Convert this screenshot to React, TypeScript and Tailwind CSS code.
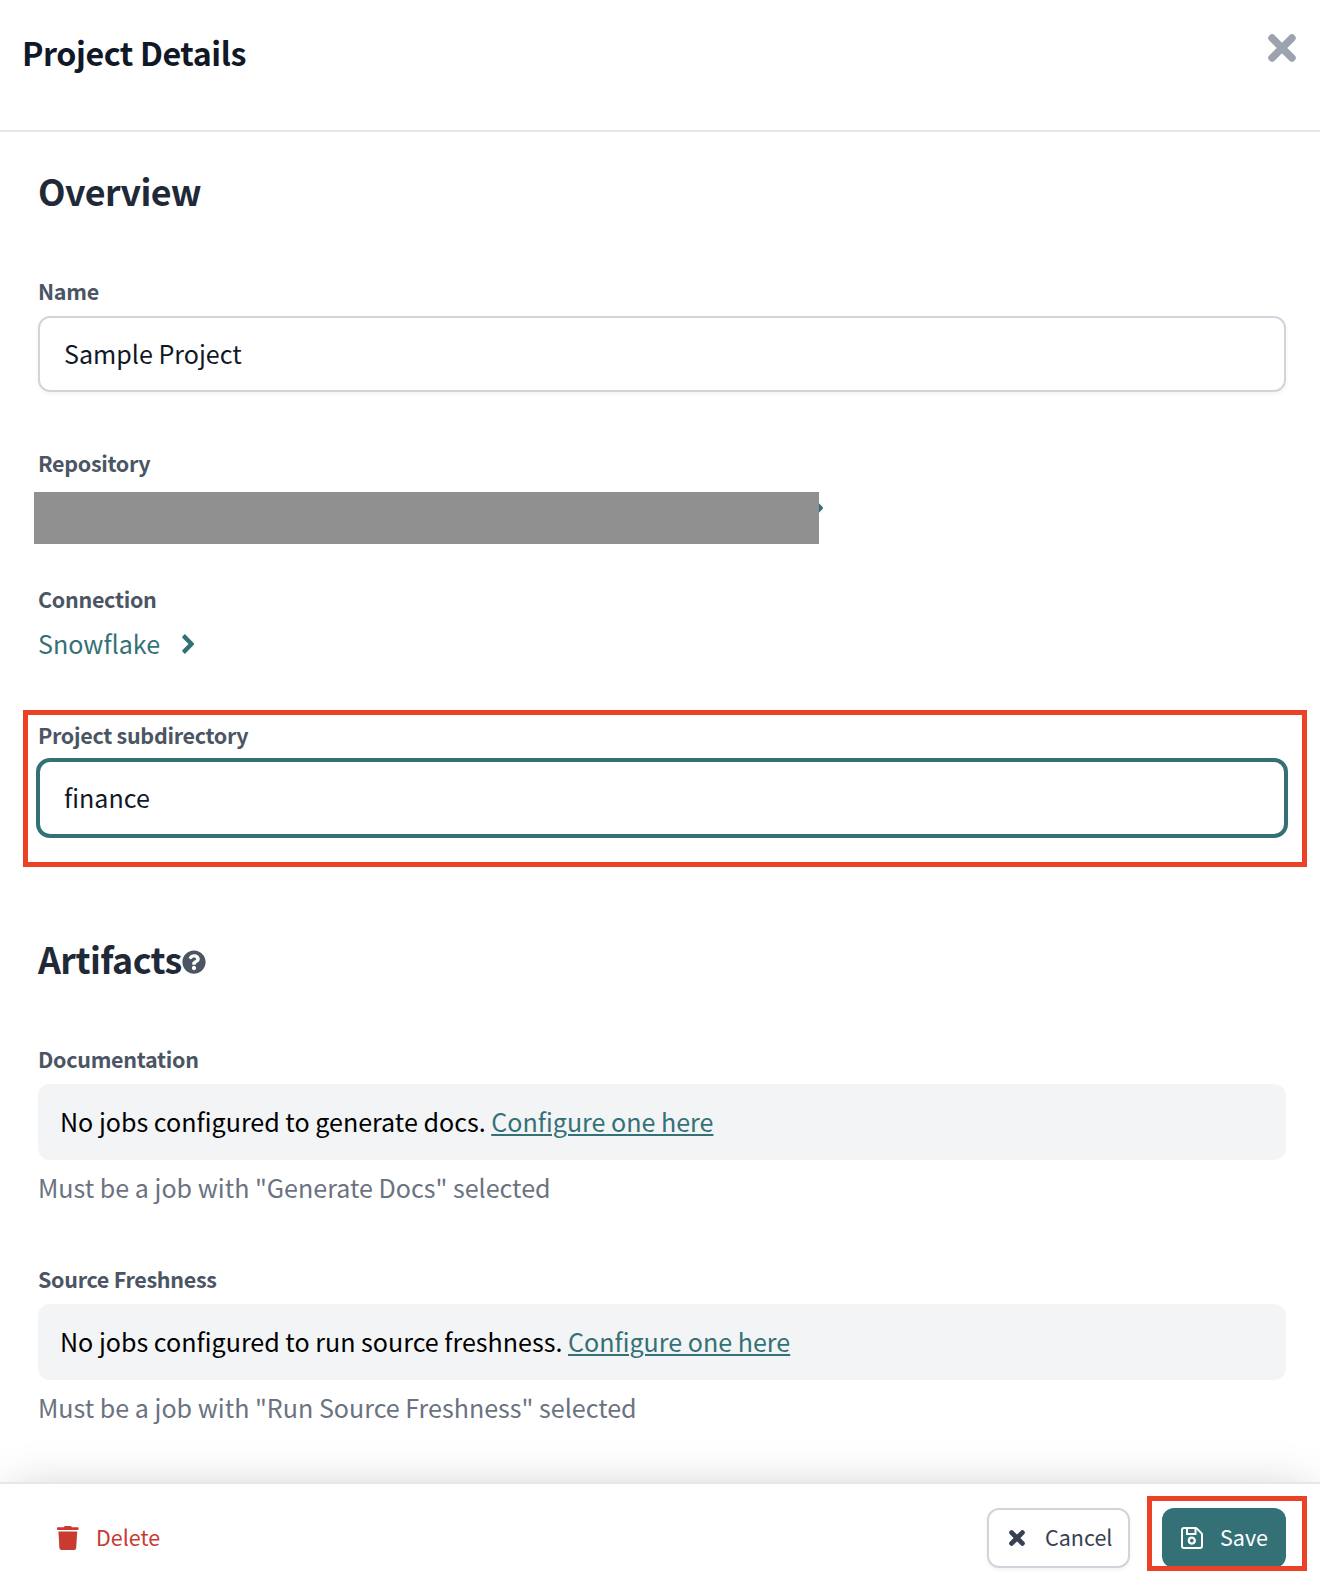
import React from "react";
import { FaQuestionCircle } from "react-icons/fa";

function Cross({ className, width }: { className: string; width: number }) {
  const inset = width / 2 + 0.3;
  return (
    <svg viewBox="0 0 28 28" className={className} fill="none" stroke="currentColor" strokeWidth={width} strokeLinecap="round">
      <path d={`M${inset} ${inset}L${28 - inset} ${28 - inset}M${28 - inset} ${inset}L${inset} ${28 - inset}`} />
    </svg>
  );
}

function Chevron({ className }: { className: string }) {
  return (
    <svg viewBox="0 0 12 20" className={className} fill="currentColor">
      <path d="M0.3 2.7L2.2 0.5Q2.8 0 3.4 0.5L11.8 9.3Q12.3 10 11.8 10.7L3.4 19.5Q2.8 20 2.2 19.5L0.3 17.3Q0 16.8 0.3 16.3L6.5 10L0.3 3.7Q0 3.2 0.3 2.7Z" />
    </svg>
  );
}

function TrashIcon() {
  return (
    <svg viewBox="0 0 22 24" className="mt-0.5 h-6 w-[22px]" fill="currentColor">
      <path d="M0.7 1.3H6.6L7.5 0.3Q7.8 0 8.2 0H13.4Q13.8 0 14.1 0.3L15 1.3H20.9Q21.6 1.3 21.6 2V3.2Q21.6 3.9 20.9 3.9H0.7Q0 3.9 0 3.2V2Q0 1.3 0.7 1.3Z" />
      <path d="M1.4 5.6H20.2L19.2 21.9Q19 24 17 24H4.6Q2.6 24 2.4 21.9Z" />
    </svg>
  );
}

function SaveIcon() {
  return (
    <svg viewBox="0 0 22 22" className="size-[22px]" fill="none" stroke="currentColor" strokeWidth="2">
      <path d="M3 1H14.6Q15.3 1 15.9 1.6L20.4 6.1Q21 6.7 21 7.5V19Q21 21 19 21H3Q1 21 1 19V3Q1 1 3 1Z" />
      <path d="M6 1V7H14.5V1.5" />
      <circle cx="10.8" cy="13.6" r="3" strokeWidth="2.2" />
    </svg>
  );
}

function Label({ children }: { children: React.ReactNode }) {
  return <div className="text-[21.5px] leading-8 font-bold tracking-[-0.3px] text-[#4b5563]">{children}</div>;
}

function JobField({ label, message, hint }: { label: string; message: string; hint: string }) {
  return (
    <div>
      <Label>{label}</Label>
      <div className="mt-[9px] h-[76px] rounded-xl bg-[#f3f4f6] pl-[22px] leading-[74px] text-black">
        {message}{" "}
        <a className="text-[#347176] underline decoration-2 underline-offset-2">Configure one here</a>
      </div>
      <p className="mt-[7px] leading-10 text-[#6b7280]">{hint}</p>
    </div>
  );
}

export default function App() {
  return (
    <div className="flex h-[1578px] w-[1320px] flex-col overflow-hidden bg-white font-['Noto_Sans_CJK_SC',sans-serif] text-[25.07px] text-[#111827]">
      <header className="flex h-[132px] shrink-0 items-start justify-between border-b-2 border-[#e5e7eb] pl-[22px] pr-6">
        <h1 className="mt-7 text-[32.2px] leading-[48px] font-bold tracking-[-0.42px]">Project Details</h1>
        <Cross className="mt-[34px] size-7 text-[#9ca3af]" width={7.6} />
      </header>

      <main className="h-[1350px] shrink-0 px-[38px] pt-[34px] pr-[34px]">
        <h2 className="text-[35.8px] leading-[48px] font-bold tracking-[-0.6px] text-[#1f2937]">Overview</h2>

        <div className="mt-[61px]">
          <Label>Name</Label>
          <div className="mt-[9px] h-[76px] rounded-xl border-2 border-[#d1d5db] pl-6 leading-[70px] shadow-[0_2px_4px_rgba(0,0,0,0.05)]">Sample Project</div>
        </div>

        <div className="mt-[55px]">
          <Label>Repository</Label>
          <div className="mt-[13px] -ml-1 flex h-[52px] text-[#347176]">
            <div className="z-10 w-[785px] bg-[#909090]" />
            <Chevron className="mt-1.5 -ml-2 h-5 w-3" />
          </div>
        </div>

        <div className="mt-[39px]">
          <Label>Connection</Label>
          <div className="mt-2 flex items-center gap-[22px] leading-10 text-[#347176]">
            Snowflake
            <Chevron className="mt-0.5 h-5 w-3" />
          </div>
        </div>

        <div className="relative mt-14">
          <Label>Project subdirectory</Label>
          <div className="mt-[7px] -mx-0.5 h-20 rounded-[14px] border-4 border-[#347176] pl-6 leading-[70px]">finance</div>
          <div className="absolute -top-[9px] -left-[15px] h-[157px] w-[1284px] border-[5px] border-[#ea4127]" />
        </div>

        <h2 className="mt-24 flex items-center text-[35.8px] leading-[48px] font-bold tracking-[-0.58px] text-[#1f2937]">
          Artifacts
          <FaQuestionCircle className="mt-[7px] size-6 text-[#4b5563]" />
        </h2>

        <div className="mt-[61px] flex flex-col gap-14">
          <JobField label="Documentation" message="No jobs configured to generate docs." hint={'Must be a job with "Generate Docs" selected'} />
          <JobField label="Source Freshness" message="No jobs configured to run source freshness." hint={'Must be a job with "Run Source Freshness" selected'} />
        </div>
      </main>

      <footer className="relative flex h-24 shrink-0 items-start justify-between border-t-2 border-[#e5e7eb] bg-white pt-6 pr-[34px] pl-[57px] text-[21.5px] leading-[58px] shadow-[0_0_50px_-12px_rgba(0,0,0,0.25)]">
        <div className="flex items-center gap-[17px] text-[#c93a31]">
          <TrashIcon />
          Delete
        </div>
        <div className="flex gap-8">
          <div className="flex h-[60px] w-[143px] items-center gap-5 rounded-xl border-2 border-[#d1d5db] pl-5 leading-[56px] text-[#374151] shadow-[0_2px_4px_rgba(0,0,0,0.05)]">
            <Cross className="size-4" width={8.5} />
            <span className="-mt-0.5">Cancel</span>
          </div>
          <div className="relative">
            <div className="flex h-[60px] w-[124px] items-center gap-[17px] rounded-xl bg-[#347176] pl-[19px] text-white">
              <SaveIcon />
              <span className="-mt-0.5">Save</span>
            </div>
            <div className="absolute -top-3 -left-[15px] h-[75px] w-[160px] border-[5px] border-[#ea4127]" />
          </div>
        </div>
      </footer>
    </div>
  );
}
